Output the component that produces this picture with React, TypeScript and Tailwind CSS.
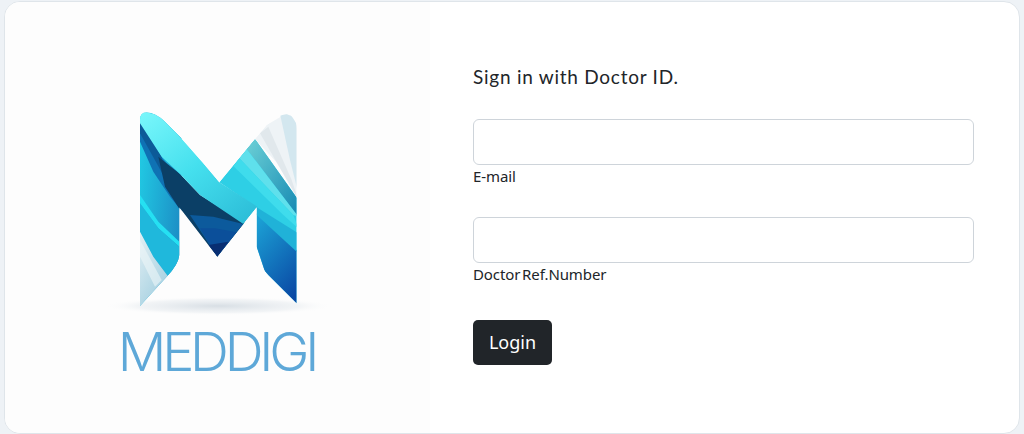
const Logo = () => (
  <svg width="250" height="220" viewBox="0 0 750 660" className="block">
    <defs>
      <clipPath id="mShape">
        <path d="M150 60 Q150 37 170 37 Q195 38 225 65 L270 110 L340 190 L388 247 L495 117 L530 75 Q565 43 590 43 Q620 48 620 85 L620 610 L535 525 Q500 490 500 440 L500 322 L382 470 L268 322 L268 465 Q265 495 230 530 L150 618 Z" />
      </clipPath>
      <linearGradient id="front" x1="0.05" y1="0" x2="0.9" y2="1">
        <stop offset="0" stopColor="#7af7fb" />
        <stop offset="0.5" stopColor="#45e0ee" />
        <stop offset="1" stopColor="#2cbdd8" />
      </linearGradient>
      <linearGradient id="legMid" x1="0" y1="0" x2="1" y2="0.5">
        <stop offset="0" stopColor="#22d3e8" />
        <stop offset="1" stopColor="#1c8fc6" />
      </linearGradient>
      <linearGradient id="legLow" x1="0" y1="0" x2="0.6" y2="1">
        <stop offset="0" stopColor="#e4f0f4" />
        <stop offset="1" stopColor="#a3cfe0" />
      </linearGradient>
      <linearGradient id="rightLow" x1="0.2" y1="0" x2="0.7" y2="1">
        <stop offset="0" stopColor="#1b9fd4" />
        <stop offset="1" stopColor="#0a48a4" />
      </linearGradient>
      <linearGradient id="teal" x1="0" y1="0" x2="1" y2="1">
        <stop offset="0" stopColor="#6cd0d6" />
        <stop offset="1" stopColor="#1488b2" />
      </linearGradient>
      <radialGradient id="shadow">
        <stop offset="0" stopColor="#9fb0bf" stopOpacity="0.4" />
        <stop offset="0.7" stopColor="#b8c6d2" stopOpacity="0.16" />
        <stop offset="1" stopColor="#ffffff" stopOpacity="0" />
      </radialGradient>
    </defs>
    <ellipse cx="385" cy="618" rx="345" ry="28" fill="url(#shadow)" />
    <g clipPath="url(#mShape)">
      {/* left leg */}
      <rect x="140" y="30" width="135" height="600" fill="url(#legMid)" />
      <polygon points="150,125 190,215 240,290 268,325 268,240 210,165 150,55" fill="#0f72b4" />
      <polygon points="150,55 215,170 225,235 150,100" fill="#0c5a98" />
      <polygon points="150,285 205,365 268,425 268,440 205,385 150,310" fill="#25e0f2" />
      <polygon points="150,310 205,385 268,440 268,480 235,530 190,470 150,395" fill="#1fb8dc" />
      <polygon points="150,395 190,470 235,530 150,625" fill="url(#legLow)" />
      <polygon points="150,420 215,540 195,560 150,470" fill="#eef6f8" opacity="0.6" />
      {/* dark fold */}
      <polygon points="205,170 270,222 330,285 470,372 382,475 265,322 225,260" fill="#0b3f66" />
      <polygon points="300,345 370,350 460,372 382,470" fill="#0c5a9c" />
      <polygon points="330,385 375,385 440,397 382,470" fill="#0b4f9a" />
      <polygon points="355,435 415,425 382,470" fill="#082e72" />
      {/* right arm */}
      <polygon points="388,247 495,117 625,300 625,620 530,530 500,440 500,322" fill="#2ecfe5" />
      <polygon points="500,340 625,455 625,620 530,530 500,440" fill="url(#rightLow)" />
      <polygon points="500,322 625,400 625,460 500,345" fill="#20b2d8" />
      <polygon points="495,117 625,300 625,350 470,147" fill="url(#teal)" />
      <polygon points="470,147 625,350 610,345 448,175" fill="#5fe0ec" />
      <polygon points="448,175 610,345 625,385 580,345 430,198" fill="#3fdcec" />
      <polygon points="495,117 530,75 590,40 625,80 625,300 590,220" fill="#eef3f6" />
      <polygon points="570,42 600,40 625,80 625,280 600,180" fill="#d3e7ef" />
      <polygon points="510,100 535,80 605,240 625,300 570,205" fill="#e1e8ec" />
      {/* front band */}
      <polygon points="140,30 225,50 270,110 340,190 388,247 502,320 460,372 330,285 270,222 215,170 150,70" fill="url(#front)" />
    </g>
  </svg>
);

export default function App() {
  return (
    <div className="h-[434px] w-[1024px] overflow-hidden bg-[#eef2f6] pl-[4px] pr-[4px] pt-[1px]">
      <div className="flex h-[433px] w-[1016px] overflow-hidden rounded-2xl border border-[#dfe5ea] bg-white">
        <div className="flex w-[425px] flex-col items-center bg-[#fdfdfd] pt-[98px]">
          <div className="-ml-[5px]">
            <Logo />
          </div>
          <p className="-ml-[2px] text-[54px] leading-[64px] font-light tracking-[-4.2px] text-[#5ea8d8] [font-family:Inter,sans-serif]">
            MEDDIGI
          </p>
        </div>
        <div className="w-[501px] pl-[43px] pt-[62px] [font-family:'Noto_Sans',sans-serif]">
          <h1 className="text-[19px] leading-[26px] font-normal tracking-[0.75px] text-[#212529] [font-family:Lato,sans-serif]">
            Sign in with Doctor ID.
          </h1>
          <div className="mt-[29px]">
            <input type="text" aria-label="E-mail" className="block h-[46px] w-[501px] rounded-[6px] border border-[#ced4da] bg-white" />
            <label className="block text-[15px] leading-[22px] tracking-[-0.1px] [word-spacing:-2px] text-[#212529]">E-mail</label>
          </div>
          <div className="mt-[30px]">
            <input type="text" aria-label="Doctor Ref.Number" className="block h-[46px] w-[501px] rounded-[6px] border border-[#ced4da] bg-white" />
            <label className="block text-[15px] leading-[22px] tracking-[-0.1px] [word-spacing:-2px] text-[#212529]">Doctor Ref.Number</label>
          </div>
          <button type="button" className="mt-[35px] h-[45px] w-[79px] rounded-[5px] bg-[#212529] text-[18px] text-white">
            Login
          </button>
        </div>
      </div>
    </div>
  );
}
